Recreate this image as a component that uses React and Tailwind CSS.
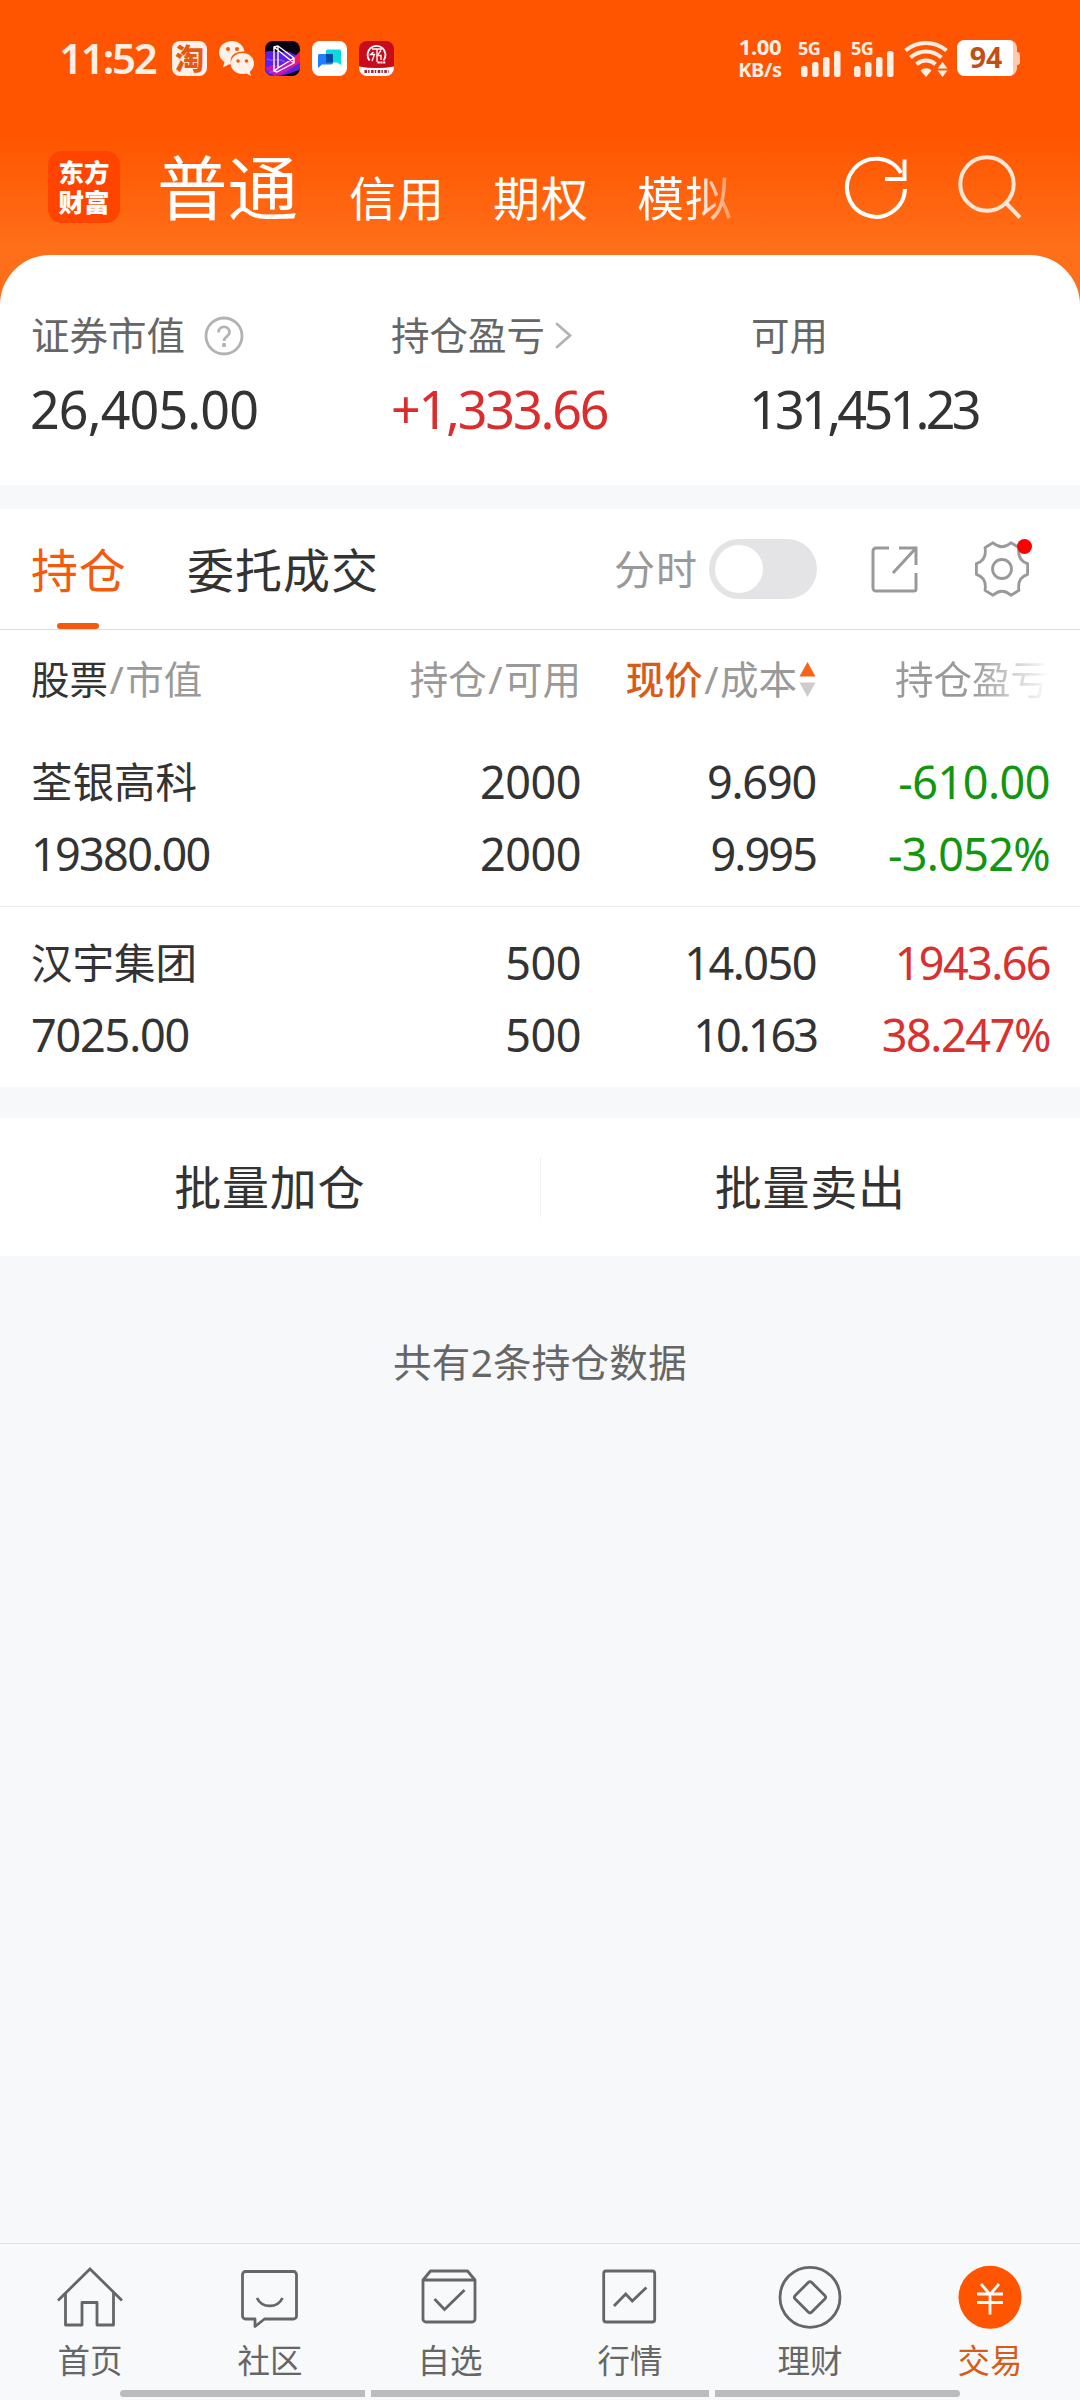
import { clsx } from "clsx";

const HOLDINGS = [
  {
    name: "荃银高科",
    value: { text: "19380.00", track: "tracking-[-1.7px]" },
    amount: "2000", usable: "2000",
    price: { text: "9.690", track: "tracking-[-1.2px]" },
    cost: { text: "9.995", track: "tracking-[-1.9px]" },
    profit: { text: "-610.00", track: "tracking-[-0.5px]" },
    ratio: { text: "-3.052%", track: "tracking-[-0.7px]" },
    down: true,
  },
  {
    name: "汉宇集团",
    value: { text: "7025.00", track: "tracking-[-1.2px]" },
    amount: "500", usable: "500",
    price: { text: "14.050", track: "tracking-[-1.5px]" },
    cost: { text: "10.163", track: "tracking-[-3px]" },
    profit: { text: "1943.66", track: "tracking-[-1.6px]" },
    ratio: { text: "38.247%", track: "tracking-[-1.4px]" },
    down: false,
  },
];

const NAV = [
  { label: "首页", Icon: HomeIcon },
  { label: "社区", Icon: ChatIcon },
  { label: "自选", Icon: PickIcon },
  { label: "行情", Icon: MarketIcon },
  { label: "理财", Icon: WealthIcon },
  { label: "交易", Icon: TradeIcon, active: true },
];

/* ---------- bottom nav icons ---------- */

function NavSvg({ children }) {
  return (
    <svg viewBox="0 0 72 72" className="size-[72px]" fill="none" stroke="#666" strokeWidth="2.8">
      {children}
    </svg>
  );
}

function HomeIcon() {
  return (
    <NavSvg>
      <path d="M4 39.5 36 8l32 31.500" />
      <path d="M11.500 32v32H28V41.500h15V64h16.500V32" strokeLinejoin="round" />
    </NavSvg>
  );
}

function ChatIcon() {
  return (
    <NavSvg>
      <path d="M11.500 10.500h48a3 3 0 0 1 3 3V55a3 3 0 0 1-3 3H30.500L21 65.500V58h-9.500a3 3 0 0 1-3-3V13.500a3 3 0 0 1 3-3Z" strokeLinejoin="round" />
      <path d="M23 37c5 10.500 20.500 10.500 25.500 0" />
    </NavSvg>
  );
}

function PickIcon() {
  return (
    <NavSvg>
      <path d="M9 19v39a3 3 0 0 0 3 3h46a3 3 0 0 0 3-3V19l-7.500-9h-37ZM9 19h52" strokeLinejoin="round" />
      <path d="m20.500 38 10 10.500L50.500 29" />
    </NavSvg>
  );
}

function MarketIcon() {
  return (
    <NavSvg>
      <rect x="9.700" y="10" width="51" height="51" rx="2.500" />
      <path d="M20 45l11.700-12L38.300 40 52.400 26.500" />
    </NavSvg>
  );
}

function WealthIcon() {
  return (
    <NavSvg>
      <circle cx="36" cy="36.300" r="30" />
      <rect x="24.300" y="24.600" width="23.400" height="23.400" rx="2.500" transform="rotate(45 36 36.300)" />
    </NavSvg>
  );
}

function TradeIcon() {
  return (
    <svg viewBox="0 0 72 72" className="size-[72px]" fill="none">
      <circle cx="36" cy="36.300" r="31.500" fill="#ff5500" />
      <path d="m27 23 9 10.500L45 23M23 33h26M23 41.500h26M36 33v20.500" stroke="#fff" strokeWidth="2.800" />
    </svg>
  );
}

/* ---------- status bar ---------- */

function SignalBars() {
  return (
    <div className="flex w-[42px] flex-col pt-[2px]">
      <span className="-ml-[1px] h-[14px] text-[18px] leading-[14px] font-bold tracking-[-0.5px]">5G</span>
      <svg viewBox="0 0 42 26" className="-mt-[4px] h-[26px] w-[42px]" fill="currentColor">
        <rect x="2" y="15" width="6.500" height="11" rx="2.500" />
        <rect x="13" y="11" width="6.500" height="15" rx="2.500" />
        <rect x="24" y="6" width="6.500" height="20" rx="2.500" />
        <rect x="35" y="0" width="6.500" height="26" rx="2.500" />
      </svg>
    </div>
  );
}

function StatusBar() {
  return (
    <div className="flex h-[116px] items-center pr-[60px] pl-[59px] text-[#ffeee4]">
      <span className="w-[113px] text-[42px] leading-[42px] font-semibold tracking-[-2.2px]">11:52</span>

      <div className="flex items-center gap-[11.700px]">
        <span className="flex size-[35px] items-center justify-center rounded-[8px] bg-[#fff0e8] text-[29px] leading-[35px] font-black text-[#e55a12]">淘</span>
        <svg viewBox="0 0 35 35" className="size-[35px]" fill="#fff0e8">
          <path d="M13 0C5.800 0 0 5 0 11.600c0 4 2 7.200 5.400 9.400L4 26.500l6-3.200c.8.200 1.600.3 2.400.3C9.500 15 16 10 25.500 10.600 24.500 4.500 19.500 0 13 0Z" />
          <path d="M23.500 12c-6.500 0-11.700 4.600-11.700 10.500S17 33 23.500 33c1.400 0 2.700-.2 4-.6L32 35l-1.200-4.300c2.600-2 4.200-4.900 4.200-8.200C35 16.600 30 12 23.500 12Z" />
          <g fill="#ff5500">
            <circle cx="9" cy="8" r="2" /><circle cx="18" cy="8" r="2" />
            <circle cx="19" cy="20" r="1.800" /><circle cx="27.500" cy="20" r="1.800" />
          </g>
        </svg>
        <svg viewBox="0 0 35 35" className="size-[35px] rounded-[8px]" fill="none">
          <rect width="35" height="35" fill="#08010f" />
          <path d="M0 11c8-3 14 3 22-1 5 2 8 4 13 5v14c-8 2-15 6-24 6H0Z" fill="#5b21e6" />
          <path d="M0 28c9-8 14 0 22-7l13-9v10c-9 4-15 13-25 13Z" fill="#c218b8" />
          <path d="m27 19 8-9v10l-8 7Z" fill="#f01c6a" />
          <path d="M2 18c6 3 12-2 18 3M4 32c7-5 12-1 18-6" stroke="#8f47ff" strokeWidth="1.500" />
          <path d="m9 6 4-1 16 12v5L12 31l-3-1ZM13 5v22l16-10M9 6l20 16M13 27l-4 3" stroke="#fff" strokeWidth="1.400" strokeLinejoin="round" />
        </svg>
        <svg viewBox="0 0 35 35" className="size-[35px]">
          <rect width="35" height="35" rx="8" fill="#fff" />
          <path d="M15.500 8.500h12a1.500 1.500 0 0 1 1.500 1.500v14l-4-2.500h-11V10a1.500 1.500 0 0 1 1.500-1.500Z" fill="#0adbe0" />
          <path d="M7.500 13H21v8.500a2 2 0 0 1-2 2h-9L6 27V14.500A1.500 1.500 0 0 1 7.500 13Z" fill="#1f80ff" />
          <path d="M14 13h7v8.500h-7Z" fill="#064a9e" />
        </svg>
        <svg viewBox="0 0 35 35" className="size-[35px] rounded-[8px]" fill="none">
          <rect width="35" height="35" fill="#c90c1c" />
          <path d="M0 25.500q17.500 3 35 0V35H0Z" fill="#fff" />
          <path d="M10.500 19.500a9 9 0 1 1 14 0" stroke="#fff" strokeWidth="1.800" />
          <path d="M13 8h10M14.500 11l-3 2.500h4l-2.500 6.500M18 8v13M22 9.500l-4 5h4v4.500" stroke="#fff" strokeWidth="1.300" />
          <path d="M18.500 21.500h8" stroke="#fff" strokeWidth="2.200" strokeDasharray="2.200 .6" />
          <path d="M5.500 30.500h24" stroke="#a02032" strokeWidth="3" strokeDasharray="2.500 1.200 1.400 1.500" />
        </svg>
      </div>

      <div className="ml-auto flex items-center">
        <div className="mr-[17px] flex w-[44px] flex-col text-center text-[22px] leading-[23px] font-bold tracking-[-0.3px]">
          <span>1.00</span>
          <span className="text-[20px]">KB/s</span>
        </div>
        <div className="flex gap-[11px]">
          <SignalBars />
          <SignalBars />
        </div>
        <svg viewBox="0 0 44 37" className="ml-[10px] h-[37px] w-[44px]" fill="none" stroke="currentColor" strokeWidth="4">
          <path d="M1.500 10.500c12-10 29-10 41 0M6.500 17.500c9.500-8 21.500-8 31 0M12.500 24.300c6-5 13-5 19 0" />
          <path d="M16.500 30.500c3-3 8-3 11 0L22 37ZM33.500 28.500 38.500 22l5 6.500ZM33.500 30.500h10L38.500 37Z" fill="currentColor" stroke="none" />
        </svg>
        <div className="ml-[9px] flex items-center">
          <div className="flex h-[36px] w-[60px] rounded-[8px] bg-[#ffc9ad]">
            <span className="h-[36px] w-[56px] rounded-l-[8px] rounded-r-[4px] bg-white pl-[2px] text-center text-[28.5px] leading-[35px] font-bold text-[#c24e14]">94</span>
          </div>
          <span className="h-[13px] w-[3px] rounded-r-[3px] bg-[#ffc9ad]" />
        </div>
      </div>
    </div>
  );
}

function Header() {
  return (
    <div className="flex h-[139px] items-start pl-[48px] text-white">
      <div className="mt-[35px] flex size-[72px] flex-col items-center justify-center rounded-[14px] bg-[#ff4400] text-[25.5px] leading-[30px] font-black">
        <span>东方</span>
        <span>财富</span>
      </div>
      <span className="mt-[36px] ml-[37px] w-[192px] text-[70.5px] leading-[72px]">普通</span>
      <div className="mt-[58px] flex gap-[48px] text-[47px] leading-[48px] tracking-[1px]">
        <span>信用</span>
        <span>期权</span>
        <span className="bg-gradient-to-r from-white from-60% to-white/30 bg-clip-text text-transparent">模拟</span>
      </div>
      <svg viewBox="0 0 72 72" className="mt-[36px] ml-[107px] size-[72px]" fill="none" stroke="#fff" strokeWidth="4">
        <path d="M65 37a29 29 0 1 1-4-16" />
        <path d="M64.500 7.500V27H45" />
      </svg>
      <svg viewBox="0 0 72 72" className="mt-[36px] ml-[41px] size-[72px]" fill="none" stroke="#ffe6d6" strokeWidth="4">
        <circle cx="34" cy="32" r="26.700" />
        <path d="m53 51 14 14.500" />
      </svg>
    </div>
  );
}

/* ---------- content ---------- */

function Summary() {
  return (
    <section className="grid h-[230px] grid-cols-3 rounded-t-[50px] bg-white pt-[56px]">
      <div className="pl-[31px]">
        <div className="flex h-[48px] items-center text-[38.5px] leading-[48px] text-[#666]">
          证券市值
          <svg viewBox="0 0 40 40" className="mt-[2px] ml-[19px] size-[40px]" fill="none" stroke="#b3b3b3" strokeWidth="2.800">
            <circle cx="20" cy="20" r="18" />
            <path d="M14.500 16.500c0-7.500 11-7.500 11 0 0 4-5.500 4-5.500 8.500" />
            <circle cx="20" cy="29" r="2.200" fill="#b3b3b3" stroke="none" />
          </svg>
        </div>
        <p className="mt-[20px] -ml-[1px] text-[52px] leading-[60px] tracking-[-0.9px] text-[#333]">26,405.00</p>
      </div>
      <div className="pl-[31px]">
        <div className="flex h-[48px] items-center text-[38.5px] leading-[48px] text-[#666]">
          持仓盈亏
          <svg viewBox="0 0 18 28" className="ml-[10px] h-[28px] w-[18px]" fill="none" stroke="#b3b3b3" strokeWidth="2.800" strokeLinecap="round">
            <path d="m2 3 13 11.500L2 26" />
          </svg>
        </div>
        <p className="mt-[20px] text-[52px] leading-[60px] tracking-[-2.2px] text-[#db2d2d]">+1,333.66</p>
      </div>
      <div className="pl-[31px]">
        <div className="h-[48px] text-[38.5px] leading-[48px] text-[#666]">可用</div>
        <p className="mt-[20px] -ml-[2px] text-[52px] leading-[60px] tracking-[-3.7px] text-[#333]">131,451.23</p>
      </div>
    </section>
  );
}

function Tabs() {
  return (
    <div className="flex h-[121px] border-b border-[#dddddd] pl-[31px] text-[47px] leading-[122px] whitespace-nowrap">
      <div className="relative w-[94px] text-[#f55a0c]">
        <span className="tracking-[0.7px]">持仓</span>
        <span className="absolute bottom-0 left-[26px] h-[6px] w-[42px] rounded-full bg-[#f55a0c]" />
      </div>
      <span className="ml-[62px] tracking-[1px] text-[#333]">委托成交</span>
      <div className="mr-[50px] ml-auto flex items-center">
        <span className="text-[41px] tracking-[1px] text-[#999]">分时</span>
        <button className="ml-[11px] h-[60px] w-[108px] rounded-full bg-[#e4e4e6] pl-[6px]">
          <span className="block size-[48px] rounded-full bg-white" />
        </button>
        <svg viewBox="0 0 48 48" className="ml-[53px] size-[48px]" fill="none" stroke="#999" strokeWidth="3">
          <path d="M19 3H6a3 3 0 0 0-3 3v37a3 3 0 0 0 3 3h38a2 2 0 0 0 2-2V28" />
          <path d="M29 3h17v17M46 3 23 28" />
        </svg>
        <div className="relative ml-[56px] size-[56px]">
          <svg viewBox="0 0 56 56" className="size-[56px]" fill="none" stroke="#999" strokeWidth="2.800" strokeLinejoin="round">
            <path d="M19 1.800Q28 9.800 37 1.800L45 6.600Q42.800 19 53.600 22.600V33.400Q42.800 37 45 49.400L37 54.200Q28 46.200 19 54.200L11 49.400Q13.200 37 2.400 33.400V22.600Q13.200 19 11 6.600Z" />
            <circle cx="28" cy="28" r="9.500" />
          </svg>
          <span className="absolute -top-[2px] -right-[2px] size-[15px] rounded-full bg-[#ff0000]" />
        </div>
      </div>
    </div>
  );
}

function Slash() {
  return <span className="mx-[1.500px]">/</span>;
}

function Figure({ text, track }) {
  return <span className={track}>{text}</span>;
}

function HoldingTable() {
  return (
    <div>
      <div className="grid h-[100px] grid-cols-[269px_281px_235px_234px] pl-[31px] text-[38.5px] leading-[98px] whitespace-nowrap text-[#999]">
        <span><b className="font-normal text-[#333]">股票</b><Slash />市值</span>
        <span className="text-right">持仓<Slash />可用</span>
        <span className="flex h-[98px] items-center justify-end">
          <span><b className="font-medium text-[#d65c1a]">现价</b><Slash />成本</span>
          <svg viewBox="0 0 17 35" className="ml-[2px] h-[35px] w-[17px]">
            <path d="m8.500 0 8 14.500H.5Z" fill="#f5641a" />
            <path d="m8.500 35 8-14.500H.5Z" fill="#ccc" />
          </svg>
        </span>
        <span className="ml-[79px] bg-gradient-to-r from-[#999] from-50% to-[#999]/0 bg-clip-text text-transparent">持仓盈亏</span>
      </div>

      {HOLDINGS.map((h, i) => (
        <div
          key={h.name}
          className={clsx(
            "grid grid-cols-[269px_281px_235px_234px] pl-[31px] text-[45px] leading-[72px] tracking-[-0.5px] text-[#333]",
            i === 0 ? "h-[177px] border-b border-[#ebebeb] pt-[16px]" : "h-[181px] pt-[20px]"
          )}
        >
          <div className="flex flex-col whitespace-nowrap">
            <span className="text-[41.5px] tracking-normal">{h.name}</span>
            <Figure {...h.value} />
          </div>
          <div className="flex flex-col text-right">
            <span>{h.amount}</span>
            <span>{h.usable}</span>
          </div>
          <div className="flex flex-col text-right">
            <Figure {...h.price} />
            <Figure {...h.cost} />
          </div>
          <div className={clsx("flex flex-col text-right", h.down ? "text-[#11960f]" : "text-[#d93030]")}>
            <Figure {...h.profit} />
            <Figure {...h.ratio} />
          </div>
        </div>
      ))}
    </div>
  );
}

function BottomNav() {
  return (
    <nav className="mt-auto h-[157px] border-t border-[#e0e1e3] bg-[#f8f9fb]">
      <div className="grid h-[146px] grid-cols-6 pt-[17px]">
        {NAV.map(({ label, Icon, active }) => (
          <div key={label} className="flex flex-col items-center">
            <Icon />
            <span className={clsx("mt-[8px] text-[32.5px] leading-[40px]", active ? "text-[#d65c1a]" : "text-[#666]")}>
              {label}
            </span>
          </div>
        ))}
      </div>
      <div className="flex gap-[6px] px-[120px]">
        <span className="h-[7px] w-[245px] rounded-l-full bg-[#bcbcbc]" />
        <span className="h-[7px] w-[338px] bg-[#bcbcbc]" />
        <span className="h-[7px] w-[245px] rounded-r-full bg-[#bcbcbc]" />
      </div>
    </nav>
  );
}

export default function App() {
  return (
    <div className="flex h-[2400px] w-[1080px] flex-col overflow-hidden bg-[#f7f8fa] font-['Noto_Sans','Noto_Sans_CJK_SC',sans-serif]">
      <div className="bg-[linear-gradient(to_bottom,#ff5500_0px,#ff5500_135px,#ff6e18_245px,#ff6e18_310px)]">
        <StatusBar />
        <Header />
        <Summary />
      </div>

      <section className="mt-[24px] h-[578px] bg-white">
        <Tabs />
        <HoldingTable />
      </section>

      <div className="mt-[31px] flex h-[138px] items-center bg-white text-[47px] leading-[72px] tracking-[0.7px] text-[#333]">
        <button className="flex-1">批量加仓</button>
        <span className="h-[60px] w-px bg-[#f0f0f2]" />
        <button className="flex-1">批量卖出</button>
      </div>

      <p className="mt-[82px] text-center text-[38.5px] leading-[48px] tracking-[0.3px] text-[#666]">共有2条持仓数据</p>

      <BottomNav />
    </div>
  );
}
